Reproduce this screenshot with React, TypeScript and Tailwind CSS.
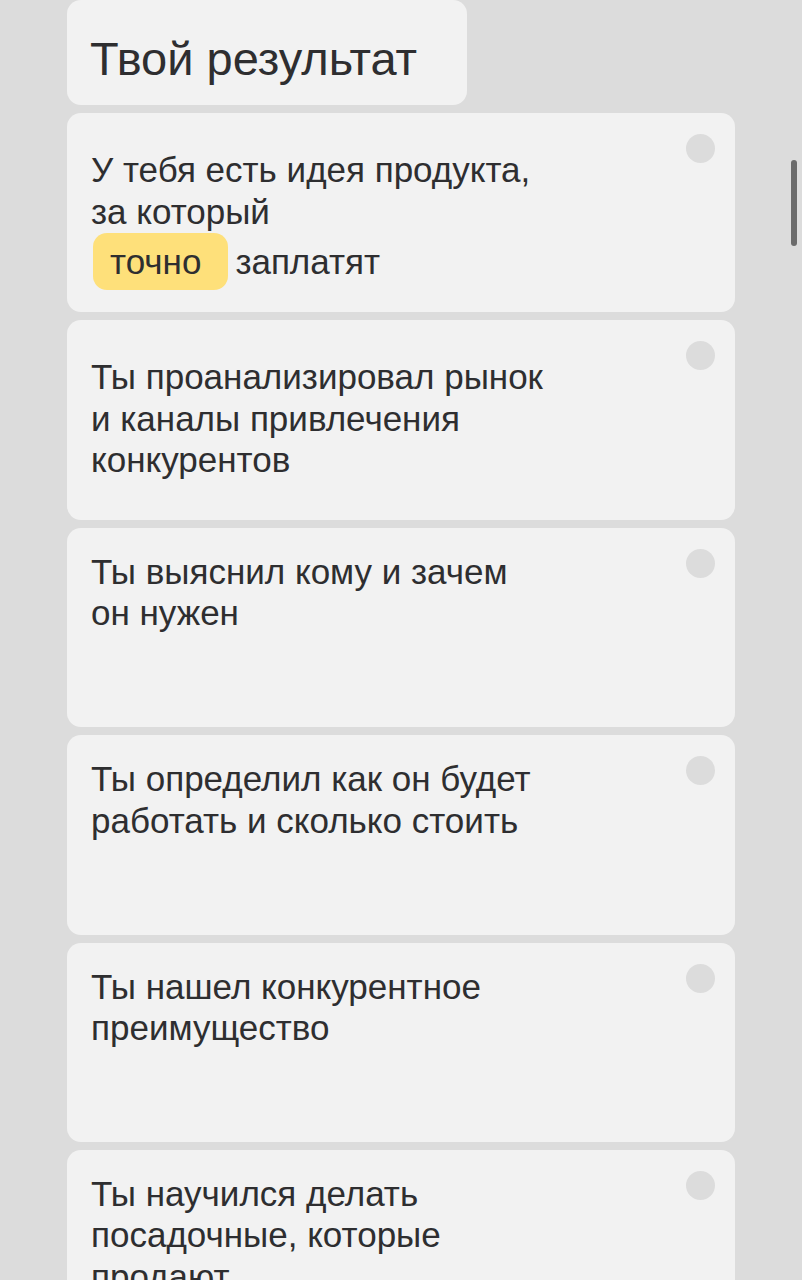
import React from 'react';

const items: { pt: string; content: React.ReactNode }[] = [
    {
        pt: 'pt-[36px]',
        content: (
            <>
                У тебя есть идея продукта,
                <br />
                за который
                <br />
                <span className="inline-flex items-center mt-[1px]">
                    <span className="inline-block bg-[#fee07a] rounded-[14px] h-[57px] leading-[57px] pl-[17px] pr-[27px] ml-[2px]">точно</span>
                    <span className="ml-[7px]">заплатят</span>
                </span>
            </>
        ),
    },
    {
        pt: 'pt-[36px]',
        content: (
            <>
                Ты проанализировал рынок
                <br />
                и каналы привлечения
                <br />
                конкурентов
            </>
        ),
    },
    {
        pt: 'pt-[23px]',
        content: (
            <>
                Ты выяснил кому и зачем
                <br />
                он нужен
            </>
        ),
    },
    {
        pt: 'pt-[23px]',
        content: (
            <>
                Ты определил как он будет
                <br />
                работать и сколько стоить
            </>
        ),
    },
    {
        pt: 'pt-[23px]',
        content: (
            <>
                Ты нашел конкурентное
                <br />
                преимущество
            </>
        ),
    },
    {
        pt: 'pt-[23px]',
        content: (
            <>
                Ты научился делать
                <br />
                посадочные, которые
                <br />
                продают
            </>
        ),
    },
];

const App: React.FC = () => {
    return (
        <div className="relative h-[1280px] overflow-hidden bg-[#dcdcdc] font-['Liberation_Sans',Arial,sans-serif] text-[#2e2e30]">
            <div className="w-[668px] ml-[67px] flex flex-col gap-[8px]">
                <div className="w-[400px] h-[105px] bg-[#f2f2f2] rounded-[14px] flex items-center pl-[23px] pt-[12px] shrink-0">
                    <h1 className="text-[47px] leading-none">Твой результат</h1>
                </div>
                {items.map((item, i) => (
                    <div key={i} className={`relative h-[199.4px] bg-[#f2f2f2] rounded-[14px] pl-[24px] shrink-0 ${item.pt}`}>
                        <p className="text-[35px] leading-[41.5px]">{item.content}</p>
                        <div className="absolute top-[21px] right-[20px] w-[29px] h-[29px] rounded-full bg-[#dcdcdc]" />
                    </div>
                ))}
            </div>
            <div className="absolute left-[791px] top-[160px] w-[6px] h-[86px] rounded-full bg-[#6b6b6b]" />
        </div>
    );
};

export default App;
